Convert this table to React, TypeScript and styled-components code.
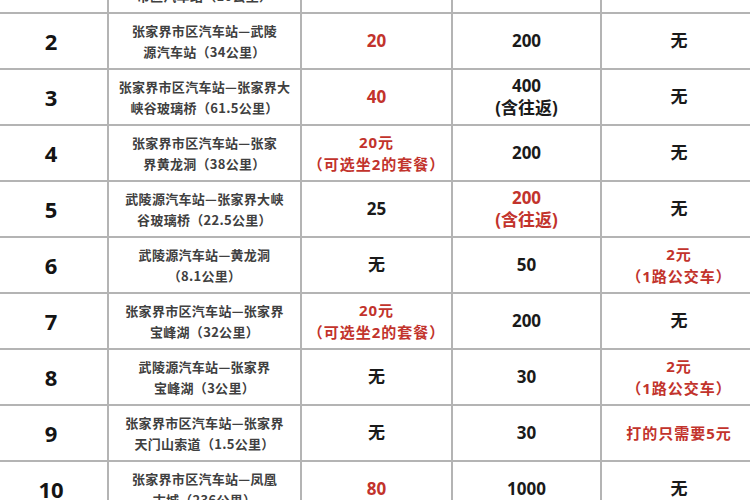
import React from 'react'
import styled, { createGlobalStyle } from 'styled-components'

const GlobalStyle = createGlobalStyle`
  html, body {
    margin: 0;
    background: #ffffff;
    overflow: hidden;
  }
`

type Row = {
  no: string
  route: [string, string]
  local: string[]
  localRed?: boolean
  ticket: string[]
  ticketRed?: boolean
  extra: string[]
  extraRed?: boolean
}

const rows: Row[] = [
  { no: '1', route: ['张家界荷花机场—张家界', '市区汽车站（10公里）'], local: ['10'], localRed: true, ticket: ['无'], extra: ['无'] },
  { no: '2', route: ['张家界市区汽车站—武陵', '源汽车站（34公里）'], local: ['20'], localRed: true, ticket: ['200'], extra: ['无'] },
  { no: '3', route: ['张家界市区汽车站—张家界大', '峡谷玻璃桥（61.5公里）'], local: ['40'], localRed: true, ticket: ['400', '(含往返)'], extra: ['无'] },
  { no: '4', route: ['张家界市区汽车站—张家', '界黄龙洞（38公里）'], local: ['20元', '（可选坐2的套餐）'], localRed: true, ticket: ['200'], extra: ['无'] },
  { no: '5', route: ['武陵源汽车站—张家界大峡', '谷玻璃桥（22.5公里）'], local: ['25'], ticket: ['200', '(含往返)'], ticketRed: true, extra: ['无'] },
  { no: '6', route: ['武陵源汽车站—黄龙洞', '（8.1公里）'], local: ['无'], ticket: ['50'], extra: ['2元', '（1路公交车）'], extraRed: true },
  { no: '7', route: ['张家界市区汽车站—张家界', '宝峰湖（32公里）'], local: ['20元', '（可选坐2的套餐）'], localRed: true, ticket: ['200'], extra: ['无'] },
  { no: '8', route: ['武陵源汽车站—张家界', '宝峰湖（3公里）'], local: ['无'], ticket: ['30'], extra: ['2元', '（1路公交车）'], extraRed: true },
  { no: '9', route: ['张家界市区汽车站—张家界', '天门山索道（1.5公里）'], local: ['无'], ticket: ['30'], extra: ['打的只需要5元'], extraRed: true },
  { no: '10', route: ['张家界市区汽车站—凤凰', '古城（236公里）'], local: ['80'], localRed: true, ticket: ['1000'], extra: ['无'] },
]

const App = () => {
  return (
    <>
      <GlobalStyle />
      <Sheet>
        <Table>
          <colgroup>
            <col style={{ width: 114 }} />
            <col style={{ width: 193 }} />
            <col style={{ width: 151 }} />
            <col style={{ width: 149 }} />
            <col style={{ width: 156 }} />
          </colgroup>
          <tbody>
            {rows.map((r) => (
              <Tr key={r.no}>
                <NumCell>{r.no}</NumCell>
                <RouteCell>
                  {r.route[0]}
                  <br />
                  {r.route[1]}
                </RouteCell>
                <PriceCell $red={r.localRed} $multi={r.local.length > 1}>
                  {r.local.map((t, i) => (
                    <Line key={i} $small={i > 0 || t.endsWith('元')}>{t}</Line>
                  ))}
                </PriceCell>
                <PriceCell $red={r.ticketRed} $multi={r.ticket.length > 1}>
                  {r.ticket.map((t, i) => (
                    <Line key={i}>{t}</Line>
                  ))}
                </PriceCell>
                <PriceCell $red={r.extraRed} $multi={r.extra.length > 1}>
                  {r.extra.map((t, i) => (
                    <Line key={i} $small={r.extraRed}>{t}</Line>
                  ))}
                </PriceCell>
              </Tr>
            ))}
          </tbody>
        </Table>
      </Sheet>
    </>
  )
}

export default App

const Sheet = styled.div`
  margin-top: -44px;
  margin-left: -7px;
  width: 763px;
`

const Table = styled.table`
  border-collapse: collapse;
  table-layout: fixed;
  width: 763px;
  font-family: "Open Sans", "Noto Sans CJK SC", sans-serif;
  font-weight: 700;
`

const Tr = styled.tr`
  height: 56px;

  td {
    border: 2px solid #b4b4b4;
    text-align: center;
    vertical-align: middle;
    padding: 0;
  }
`

const NumCell = styled.td`
  font-size: 22px;
  color: #141414;
`

const RouteCell = styled.td`
  font-family: "Noto Sans CJK SC", sans-serif;
  font-size: 13px;
  letter-spacing: 0.3px;
  line-height: 21px;
  color: #404040;
`

const PriceCell = styled.td<{ $red?: boolean; $multi?: boolean }>`
  color: ${(p) => (p.$red ? '#c2332c' : '#1a1a1a')};
  font-size: 17px;
  line-height: ${(p) => (p.$multi ? '22px' : '24px')};
`

const Line = styled.div<{ $small?: boolean }>`
  font-size: ${(p) => (p.$small ? '15px' : '17px')};
  letter-spacing: ${(p) => (p.$small ? '1px' : '0')};
  white-space: nowrap;
`
